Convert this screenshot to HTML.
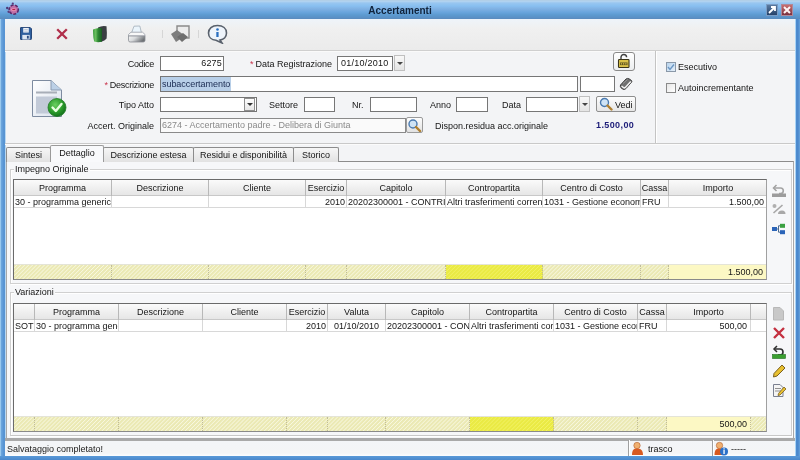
<!DOCTYPE html>
<html><head><meta charset="utf-8">
<style>
*{box-sizing:border-box;margin:0;padding:0}
html,body{width:800px;height:460px;overflow:hidden;background:#5d9ad6}
body{position:relative;font-family:"Liberation Sans",sans-serif;font-size:9px;color:#151515;filter:blur(0.3px)}
.a{position:absolute}
.lbl{position:absolute;white-space:nowrap;line-height:11px;text-align:right}
.box{position:absolute;background:#fff;border:1px solid #767676}
.req{color:#c8324a}
#frameL{left:0;top:19px;width:6px;height:441px;background:linear-gradient(90deg,#98c8ee 0,#98c8ee 1px,#6aa4dc 1.5px,#5592d2 4px,#5a96d4 5px,#a8d0f0 5px,#c8e0f4 6px)}
#frameR{left:795px;top:19px;width:5px;height:441px;background:linear-gradient(90deg,#a8d4f6 0,#a8d4f6 1px,#4e8cd0 1px,#4a88cc 3px,#6aa4dc 5px)}
#frameB{left:0;top:456px;width:800px;height:4px;background:linear-gradient(#5a9ad8,#4a88cc)}
#title{left:0;top:0;width:800px;height:19px;background:linear-gradient(#aac8e0 0px,#b8d6f0 1px,#98c6f0 3px,#88bff0 6px,#7fb0e2 9px,#6aa6de 12px,#5c9ad0 15px,#5a8fc4 18px,#5a8abb 19px)}
#title .t{position:absolute;left:0;width:800px;top:5px;text-align:center;font-weight:bold;font-size:10px;color:#10243c;line-height:12px}
#client{left:5px;top:19px;width:790px;height:437px;background:#f3f4f6}
#toolbar{left:5px;top:19px;width:790px;height:32px;background:linear-gradient(#eef4fa,#f0f0f0 30%,#ebebeb);border-bottom:1px solid #cfcfcf}
.dd{background:linear-gradient(#f8f8f8,#e4e4e4);border:1px solid #c0c0c0}
.dd::after{content:"";position:absolute;left:2px;top:6px;border-left:3px solid transparent;border-right:3px solid transparent;border-top:3px solid #444}
.dd2{background:linear-gradient(#fdfdfd,#e8e8e8);border:1px solid #8e8e8e}
.dd2::after{content:"";position:absolute;left:1.5px;top:4px;border-left:3px solid transparent;border-right:3px solid transparent;border-top:3px solid #333}

.tab{position:absolute;top:147px;height:15px;border:1px solid #8c8c8c;border-bottom:none;background:linear-gradient(#f6f6f6,#e2e2e2);text-align:center;line-height:14px;white-space:nowrap;border-radius:2px 2px 0 0}
.tab.sel{top:145px;height:17px;background:#f8f9fb;border-color:#9a9a9a;line-height:14px;z-index:2}
.grp{position:absolute;border:1px solid #d0d0d0;box-shadow:inset 1px 1px 0 #ffffff,1px 1px 0 #ffffff}
.glbl{position:absolute;background:#f6f7f9;padding:0 1px;line-height:11px;white-space:nowrap}
.grid{position:absolute;background:#fff;border:1px solid #6a6a6a;border-right-color:#a0a0a0;border-bottom-color:#8a8a8a;overflow:hidden}
.hdr{position:absolute;left:0;top:0;height:16px;background:linear-gradient(#fbfbfb,#f0f0f0 50%,#e6e6e6);border-bottom:1px solid #c8c8c8}
.hc{position:absolute;top:0;height:16px;border-right:1px solid #b8b8b8;text-align:center;line-height:17px;white-space:nowrap;overflow:hidden}
.rc{position:absolute;height:12px;border-right:1px solid #d8d8d8;border-bottom:1px solid #d8d8d8;line-height:12px;white-space:nowrap;overflow:hidden;padding:0 1px}
.tot{position:absolute;left:0;height:15px;background:repeating-linear-gradient(135deg,#ebe9b4 0px,#ebe9b4 1.3px,#f8f8e0 2px,#ebe9b4 2.8px);border-top:1px solid #e4e4d8}
.tc{position:absolute;top:0;height:14px;border-right:1px dotted #c0bc98;line-height:14px;text-align:right;padding-right:2px;white-space:nowrap}
.sep{position:absolute;width:1px;height:8px;background:#d6d6d6}
</style></head><body>
<div class="a" id="client"></div>
<div class="a" id="title"><div class="t">Accertamenti</div></div>
<div class="a" id="frameL"></div>
<div class="a" id="frameR"></div>
<div class="a" id="frameB"></div>
<div class="a" id="toolbar"></div>


<!-- title icon & buttons -->
<svg class="a" style="left:5px;top:2px" width="16" height="15" viewBox="0 0 16 15">
 <ellipse cx="8.7" cy="7.6" rx="4.6" ry="4.6" fill="#c070a8"/>
 <ellipse cx="8.7" cy="7.6" rx="4.6" ry="4.6" fill="none" stroke="#5a2a6a" stroke-width="1.6" stroke-dasharray="3 1.5"/>
 <ellipse cx="8.7" cy="7.6" rx="2.6" ry="1.6" fill="#f4a0c0"/>
 <rect x="7.3" y="6.8" width="3" height="1.4" fill="#b02050"/>
 <circle cx="2.2" cy="6" r="1.2" fill="#4a3a7a"/><circle cx="3.5" cy="9.8" r="1.1" fill="#5a3a7a"/><circle cx="7.8" cy="1.5" r="1.1" fill="#5a3a7a"/>
</svg>
<div class="a" style="left:766px;top:4px;width:12px;height:12px;background:linear-gradient(#5a7aa0,#25426a);border:1px solid #7a9cc4"></div>
<svg class="a" style="left:766px;top:4px" width="12" height="12" viewBox="0 0 12 12"><path d="M3 9 L8.5 3.5 M5 3 H9 V7" fill="none" stroke="#ffffff" stroke-width="1.8"/></svg>
<div class="a" style="left:781px;top:4px;width:12px;height:12px;background:linear-gradient(#c87070,#7a3040);border:1px solid #b08898"></div>
<svg class="a" style="left:781px;top:4px" width="12" height="12" viewBox="0 0 12 12"><path d="M3 3 L9 9 M9 3 L3 9" fill="none" stroke="#fff4f4" stroke-width="2"/></svg>
<!-- toolbar icons -->
<svg class="a" style="left:20px;top:27px" width="12" height="13" viewBox="0 0 13 14" preserveAspectRatio="none">
 <path d="M0.5 1 Q0.5 0.5 1 0.5 H11 L12.5 2 V12.5 Q12.5 13.5 11.5 13.5 H1 Q0.5 13.5 0.5 13 Z" fill="#2f5f9e"/>
 <path d="M0.5 1 Q0.5 0.5 1 0.5 H11 L12.5 2 V12.5 Q12.5 13.5 11.5 13.5 H1 Q0.5 13.5 0.5 13 Z" fill="none" stroke="#1c3e70" stroke-width="1"/>
 <rect x="3.5" y="1" width="6" height="5" fill="#eef2f8"/>
 <rect x="4.5" y="2.3" width="4" height="0.9" fill="#b8c4d4"/><rect x="4.5" y="4" width="4" height="0.9" fill="#b8c4d4"/>
 <rect x="2.5" y="8.5" width="8" height="5" fill="#dde6f2"/>
 <rect x="7.5" y="9.5" width="2" height="3" fill="#2a4a80"/>
</svg>
<svg class="a" style="left:55px;top:27px" width="14" height="14" viewBox="0 0 14 14">
 <path d="M2.2 2.2 L11.8 11.8 M11.8 2.2 L2.2 11.8" stroke="#b02e4a" stroke-width="2.3"/>
</svg>
<svg class="a" style="left:92px;top:25px" width="16" height="18" viewBox="0 0 16 18">
 <defs><linearGradient id="gb" x1="0" y1="0" x2="1" y2="0"><stop offset="0" stop-color="#3c9c40"/><stop offset="0.3" stop-color="#6cc060"/><stop offset="0.55" stop-color="#2e8a34"/><stop offset="1" stop-color="#1a5a22"/></linearGradient></defs>
 <path d="M6 2.5 Q10 0.3 14.5 1.3 Q15.2 8 14.6 13.5 Q13.2 15.6 10 16.6 L6 15 Z" fill="#3a3e42"/>
 <path d="M1 4.6 Q5 2.4 10 3.2 L10 16.8 Q5.5 17.6 2.2 16.6 Q1 13 1 4.6 Z" fill="url(#gb)"/>
</svg>
<svg class="a" style="left:127px;top:25px" width="19" height="18" viewBox="0 0 19 18">
 <defs><linearGradient id="pb" x1="0" y1="0" x2="1" y2="0.4"><stop offset="0" stop-color="#f4f4f4"/><stop offset="0.45" stop-color="#d8dadc"/><stop offset="1" stop-color="#6e7276"/></linearGradient></defs>
 <path d="M4.5 8 L7 1.2 L12.8 1 L14.5 8 Z" fill="#eaf4fb" stroke="#a0acb8" stroke-width="0.8"/>
 <path d="M1.5 9.5 L4 7.2 H15.5 L18 9.5 V11 H1.5 Z" fill="#f8f8f8" stroke="#9aa0a8" stroke-width="0.8"/>
 <path d="M1.5 11 H18 V15.3 Q18 17 16.3 17 H3.2 Q1.5 17 1.5 15.3 Z" fill="url(#pb)" stroke="#8a8e94" stroke-width="0.8"/>
</svg>
<div class="sep" style="left:162px;top:30px"></div>
<svg class="a" style="left:170px;top:24px" width="21" height="20" viewBox="0 0 21 20">
 <path d="M7 2 H19 V14 H7 Z" fill="#ececec" stroke="#8a8a8a" stroke-width="1.4"/>
 <path d="M1 10 L7 6 L14 11 L9 16 L6 18 Z" fill="#7e7e7e"/>
 <path d="M7 13 L13 9 L18 13 L12 18 Z" fill="#6e6e6e"/>
</svg>
<div class="sep" style="left:198px;top:30px"></div>
<svg class="a" style="left:207px;top:24px" width="21" height="20" viewBox="0 0 21 20">
 <path d="M10.5 1.5 C16 1.5 19.5 4.5 19.5 9 C19.5 13 16.5 15.5 13 16 L15 19 L9 16.3 C4.5 16 1.5 13 1.5 9 C1.5 4.5 5 1.5 10.5 1.5 Z" fill="#eef4fb" stroke="#59616c" stroke-width="1.6"/>
 <circle cx="10.5" cy="5.5" r="1.3" fill="#2a6fc0"/>
 <path d="M9.3 8 H11.6 V13 H9.3 Z" fill="#2a6fc0"/>
</svg>
<!-- form -->
<div class="a" style="left:5px;top:51px;width:790px;height:1px;background:#fafafa"></div>
<div class="a" style="left:655px;top:51px;width:1px;height:93px;background:#c4c4c4"></div>
<div class="a" style="left:656px;top:51px;width:1px;height:93px;background:#ffffff"></div>
<div class="a" style="left:5px;top:143px;width:790px;height:1px;background:#c9c9c9"></div>
<div class="a" style="left:5px;top:144px;width:790px;height:1px;background:#fbfbfb"></div>
<!-- doc icon -->
<svg class="a" style="left:30px;top:78px" width="40" height="42" viewBox="0 0 40 42">
 <defs><linearGradient id="dg" x1="0" y1="0" x2="1" y2="1"><stop offset="0" stop-color="#ffffff"/><stop offset="1" stop-color="#d8e0ec"/></linearGradient>
 <radialGradient id="gg" cx="0.4" cy="0.35" r="0.7"><stop offset="0" stop-color="#6ad060"/><stop offset="0.6" stop-color="#2a9a2a"/><stop offset="1" stop-color="#0f6a18"/></radialGradient></defs>
 <path d="M2.5 2.5 H21 L31.5 12 V38.5 H2.5 Z" fill="url(#dg)" stroke="#7d8ba0" stroke-width="1"/>
 <path d="M21 2.5 V12 H31.5" fill="#bcd0e6" stroke="#8a9ab0" stroke-width="1"/>
 <rect x="6" y="13.5" width="21" height="2" fill="#a8aeb8"/>
 <rect x="6" y="18.5" width="21" height="17" fill="#c2cad8"/>
 <circle cx="27" cy="29.5" r="9" fill="url(#gg)" stroke="#1d7a22" stroke-width="0.8"/>
 <path d="M22.5 29.5 L25.8 33 L31.5 26" fill="none" stroke="#e8ffe0" stroke-width="2.4" stroke-linecap="round" stroke-linejoin="round"/>
</svg>
<!-- labels row 1 -->
<div class="lbl" style="right:646px;top:59px;letter-spacing:-0.3px">Codice</div>
<div class="box" style="left:160px;top:56px;width:64px;height:15px;text-align:right;padding:1px 1px 0 0;line-height:11px;letter-spacing:0.2px">6275</div>
<div class="lbl" style="left:250px;top:59px"><span class="req" style="margin-right:2px">*</span>Data Registrazione</div>
<div class="box" style="left:337px;top:56px;width:56px;height:15px;padding:1px 0 0 3px;line-height:11px;letter-spacing:0.25px">01/10/2010</div>
<div class="a dd" style="left:394px;top:55px;width:11px;height:16px"></div>
<div class="a" style="left:613px;top:52px;width:22px;height:19px;border:1.5px solid #8a8a8a;border-radius:3px;background:linear-gradient(#ffffff,#eceef0)"></div>
<svg class="a" style="left:616px;top:53px" width="16" height="16" viewBox="0 0 16 16">
 <path d="M5 7 V4.3 A2.8 2.8 0 0 1 10.6 4.3" fill="none" stroke="#404040" stroke-width="1.4"/>
 <rect x="2.5" y="6.5" width="10.5" height="8" rx="0.8" fill="#d8c048" stroke="#3a3418" stroke-width="1.1"/>
 <rect x="4" y="9.5" width="7.5" height="2.6" fill="#5a5020"/>
 <rect x="4.8" y="10.2" width="1.3" height="1.3" fill="#d8c048"/><rect x="7" y="10.2" width="1.3" height="1.3" fill="#d8c048"/><rect x="9.2" y="10.2" width="1.3" height="1.3" fill="#d8c048"/>
</svg>
<!-- row 2 -->
<div class="lbl" style="right:646px;top:80px;letter-spacing:-0.25px"><span class="req" style="margin-right:2px">*</span>Descrizione</div>
<div class="box" style="left:160px;top:76px;width:418px;height:16px;padding:0 0 0 0;line-height:14px"><span style="display:inline-block;background:#b8cfe8;color:#1a2a50;padding:0 1px;letter-spacing:-0.05px">subaccertamento</span></div>
<div class="box" style="left:580px;top:76px;width:35px;height:16px"></div>
<svg class="a" style="left:619px;top:77px" width="14" height="14" viewBox="0 0 14 14">
 <path d="M1.5 8 L7 2 Q8.5 1 10 1.8 L12.5 3.5 Q13.2 4.3 12.5 5.2 L7 11.5 Q5.5 13 4 12.2 L2 10.8 Q1 9.8 1.5 8 Z" fill="#707070" stroke="#3e3e3e" stroke-width="1"/>
 <path d="M2.5 9 L4.5 10.6 Q5.5 11.2 6.3 10.4 L11.8 4.5" fill="none" stroke="#f0f0f0" stroke-width="1.5"/>
 <path d="M4 6.5 L8.5 2.5" stroke="#9a9a9a" stroke-width="1"/>
</svg>
<!-- row 3 -->
<div class="lbl" style="right:646px;top:100px">Tipo Atto</div>
<div class="box" style="left:160px;top:97px;width:97px;height:15px"></div>
<div class="a dd2" style="left:244px;top:98px;width:11px;height:13px"></div>
<div class="lbl" style="left:269px;top:100px">Settore</div>
<div class="box" style="left:304px;top:97px;width:31px;height:15px"></div>
<div class="lbl" style="left:352px;top:100px">Nr.</div>
<div class="box" style="left:370px;top:97px;width:47px;height:15px"></div>
<div class="lbl" style="left:430px;top:100px">Anno</div>
<div class="box" style="left:456px;top:97px;width:32px;height:15px"></div>
<div class="lbl" style="left:502px;top:100px">Data</div>
<div class="box" style="left:526px;top:97px;width:52px;height:15px"></div>
<div class="a dd" style="left:579px;top:96px;width:11px;height:16px"></div>
<div class="a" style="left:596px;top:96px;width:40px;height:16px;border:1px solid #8e8e8e;border-radius:2px;background:linear-gradient(#fdfdfd,#e6e6e6)"></div>
<svg class="a" style="left:599px;top:97px" width="14" height="14" viewBox="0 0 14 14">
 <circle cx="5.5" cy="5.5" r="4" fill="#cfe4f6" stroke="#4a7ab0" stroke-width="1.4"/>
 <path d="M8.5 8.5 L12.5 12.5" stroke="#b08030" stroke-width="2.4" stroke-linecap="round"/>
</svg>
<div class="lbl" style="left:615px;top:100px;color:#111">Vedi</div>
<!-- row 4 -->
<div class="lbl" style="right:646px;top:121px">Accert. Originale</div>
<div class="box" style="left:160px;top:118px;width:246px;height:15px;padding:1px 0 0 1px;line-height:11px;color:#8a8a8a;background:#fafafa;border-color:#8a8a8a">6274 - Accertamento padre - Delibera di Giunta</div>
<div class="a" style="left:406px;top:117px;width:17px;height:16px;border:1px solid #9a9a9a;border-radius:2px;background:linear-gradient(#fdfdfd,#e2e2e2)"></div>
<svg class="a" style="left:407px;top:118px" width="15" height="14" viewBox="0 0 15 14">
 <circle cx="6" cy="6" r="4" fill="#cfe4f6" stroke="#4a7ab0" stroke-width="1.4"/>
 <path d="M9 9 L13 13" stroke="#b08030" stroke-width="2.4" stroke-linecap="round"/>
</svg>
<div class="lbl" style="left:435px;top:121px">Dispon.residua acc.originale</div>
<div class="lbl" style="left:596px;top:120px;font-weight:bold;font-size:9px;letter-spacing:0.4px;color:#1c1c78">1.500,00</div>
<!-- checkboxes -->
<div class="a" style="left:666px;top:62px;width:10px;height:10px;border:1px solid #8a98a8;background:linear-gradient(135deg,#b8d4ee,#e4eef8)"></div>
<svg class="a" style="left:667px;top:63px" width="8" height="8" viewBox="0 0 8 8"><path d="M1 4 L3 6.5 L7 1.5" fill="none" stroke="#6a96c4" stroke-width="1.4"/></svg>
<div class="lbl" style="left:678px;top:62px">Esecutivo</div>
<div class="a" style="left:666px;top:83px;width:10px;height:10px;border:1px solid #8a8a8a;background:linear-gradient(135deg,#e6e6e6,#ffffff)"></div>
<div class="lbl" style="left:678px;top:83px">Autoincrementante</div>

<!-- tabs -->
<div class="a" style="left:6px;top:161px;width:788px;height:278px;border:1px solid #a8a8a8;border-top-color:#8c8c8c;background:#f6f7f9"></div>
<div class="tab" style="left:6px;width:45px">Sintesi</div>
<div class="tab sel" style="left:50px;width:54px">Dettaglio</div>
<div class="tab" style="left:103px;width:91px">Descrizione estesa</div>
<div class="tab" style="left:193px;width:101px">Residui e disponibilità</div>
<div class="tab" style="left:293px;width:46px">Storico</div>
<!-- group 1 -->
<div class="grp" style="left:10px;top:169px;width:782px;height:115px"></div>
<div class="glbl" style="left:14px;top:164px">Impegno Originale</div>
<div class="grid" style="left:13px;top:179px;width:754px;height:101px">
 <div class="hdr" style="width:752px"></div>
 <div class="hc" style="left:0;width:98px">Programma</div>
 <div class="hc" style="left:98px;width:97px">Descrizione</div>
 <div class="hc" style="left:195px;width:97px">Cliente</div>
 <div class="hc" style="left:292px;width:41px">Esercizio</div>
 <div class="hc" style="left:333px;width:99px">Capitolo</div>
 <div class="hc" style="left:432px;width:97px">Contropartita</div>
 <div class="hc" style="left:529px;width:98px">Centro di Costo</div>
 <div class="hc" style="left:627px;width:28px">Cassa</div>
 <div class="hc" style="left:655px;width:98px;border-right:none">Importo</div>
 <div class="rc" style="left:0;top:16px;width:98px">30 - programma generico</div>
 <div class="rc" style="left:98px;top:16px;width:97px"></div>
 <div class="rc" style="left:195px;top:16px;width:97px"></div>
 <div class="rc" style="left:292px;top:16px;width:41px;text-align:right">2010</div>
 <div class="rc" style="left:333px;top:16px;width:99px">20202300001 - CONTRIBUTI</div>
 <div class="rc" style="left:432px;top:16px;width:97px">Altri trasferimenti correnti</div>
 <div class="rc" style="left:529px;top:16px;width:98px">1031 - Gestione economica</div>
 <div class="rc" style="left:627px;top:16px;width:28px">FRU</div>
 <div class="rc" style="left:655px;top:16px;width:98px;text-align:right;padding-right:3px;border-right:none">1.500,00</div>
 <div class="tot" style="top:84px;width:752px">
  <div class="tc" style="left:0;width:98px"></div><div class="tc" style="left:98px;width:97px"></div><div class="tc" style="left:195px;width:97px"></div><div class="tc" style="left:292px;width:41px"></div><div class="tc" style="left:333px;width:99px"></div>
  <div class="tc" style="left:432px;width:97px;background:repeating-linear-gradient(135deg,#eaea44 0px,#eaea44 1.4px,#f2f266 2px,#eaea44 2.8px)"></div>
  <div class="tc" style="left:529px;width:98px"></div><div class="tc" style="left:627px;width:28px"></div>
  <div class="tc" style="left:655px;width:97px;background:#fcf8c4;border-right:none;padding-right:3px">1.500,00</div>
 </div>
</div>
<!-- group 2 -->
<div class="grp" style="left:10px;top:292px;width:782px;height:144px;border-bottom-color:#c8c8c8"></div>
<div class="glbl" style="left:14px;top:287px">Variazioni</div>
<div class="grid" style="left:13px;top:303px;width:754px;height:129px">
 <div class="hdr" style="width:752px"></div>
 <div class="hc" style="left:0;width:21px"></div>
 <div class="hc" style="left:21px;width:84px">Programma</div>
 <div class="hc" style="left:105px;width:84px">Descrizione</div>
 <div class="hc" style="left:189px;width:84px">Cliente</div>
 <div class="hc" style="left:273px;width:41px">Esercizio</div>
 <div class="hc" style="left:314px;width:58px">Valuta</div>
 <div class="hc" style="left:372px;width:84px">Capitolo</div>
 <div class="hc" style="left:456px;width:84px">Contropartita</div>
 <div class="hc" style="left:540px;width:84px">Centro di Costo</div>
 <div class="hc" style="left:624px;width:29px">Cassa</div>
 <div class="hc" style="left:653px;width:84px">Importo</div>
 <div class="hc" style="left:737px;width:16px;border-right:none"></div>
 <div class="rc" style="left:0;top:16px;width:21px">SOT</div>
 <div class="rc" style="left:21px;top:16px;width:84px">30 - programma generico</div>
 <div class="rc" style="left:105px;top:16px;width:84px"></div>
 <div class="rc" style="left:189px;top:16px;width:84px"></div>
 <div class="rc" style="left:273px;top:16px;width:41px;text-align:right">2010</div>
 <div class="rc" style="left:314px;top:16px;width:58px;text-align:center">01/10/2010</div>
 <div class="rc" style="left:372px;top:16px;width:84px">20202300001 - CONTRIBUTI</div>
 <div class="rc" style="left:456px;top:16px;width:84px">Altri trasferimenti correnti</div>
 <div class="rc" style="left:540px;top:16px;width:84px">1031 - Gestione economica</div>
 <div class="rc" style="left:624px;top:16px;width:29px">FRU</div>
 <div class="rc" style="left:653px;top:16px;width:84px;text-align:right;padding-right:3px">500,00</div>
 <div class="rc" style="left:737px;top:16px;width:16px;border-right:none"></div>
 <div class="tot" style="top:112px;width:752px">
  <div class="tc" style="left:0;width:21px"></div><div class="tc" style="left:21px;width:84px"></div><div class="tc" style="left:105px;width:84px"></div><div class="tc" style="left:189px;width:84px"></div><div class="tc" style="left:273px;width:41px"></div><div class="tc" style="left:314px;width:58px"></div><div class="tc" style="left:372px;width:84px"></div>
  <div class="tc" style="left:456px;width:84px;background:repeating-linear-gradient(135deg,#eaea44 0px,#eaea44 1.4px,#f2f266 2px,#eaea44 2.8px)"></div>
  <div class="tc" style="left:540px;width:84px"></div><div class="tc" style="left:624px;width:29px"></div>
  <div class="tc" style="left:653px;width:84px;background:#fcf8c4;padding-right:3px">500,00</div>
  <div class="tc" style="left:737px;width:15px;border-right:none"></div>
 </div>
</div>

<!-- side icons grid1 -->
<svg class="a" style="left:771px;top:183px" width="16" height="15" viewBox="0 0 16 15">
 <path d="M5.5 2 L2.5 5 L5.5 8" fill="none" stroke="#a0a0a0" stroke-width="1.5"/>
 <path d="M3 5 H9.5 A2.8 2.8 0 0 1 9.5 10.6 H8" fill="none" stroke="#a4a4a4" stroke-width="1.6"/>
 <rect x="1" y="10.5" width="14" height="3.5" fill="#9c9c9c"/>
</svg>
<svg class="a" style="left:771px;top:203px" width="15" height="12" viewBox="0 0 15 12">
 <circle cx="3.5" cy="3" r="2" fill="#b0b0b0"/>
 <path d="M2.5 10 L11.5 2" stroke="#a8a8a8" stroke-width="1.6"/>
 <path d="M7 11 Q7 7.5 11 7.5 Q14.5 7.5 14.5 11 Z" fill="#a8a8a8"/>
</svg>
<svg class="a" style="left:771px;top:223px" width="15" height="12" viewBox="0 0 15 12">
 <rect x="1" y="4" width="5" height="4" fill="#2a64b8"/>
 <rect x="9" y="0.8" width="5" height="4" fill="#3aa040"/>
 <rect x="9" y="7.2" width="5" height="4" fill="#2a64b8"/>
 <path d="M6 6 H7.5 V2.8 H9 M7.5 6 V9.2 H9" fill="none" stroke="#4a6a90" stroke-width="1"/>
</svg>
<!-- side icons grid2 -->
<svg class="a" style="left:772px;top:307px" width="13" height="14" viewBox="0 0 13 14">
 <path d="M1.5 0.5 H8 L11.5 4 V13 H1.5 Z" fill="#c8c8c8" stroke="#b8b8b8" stroke-width="1"/>
</svg>
<svg class="a" style="left:772px;top:326px" width="14" height="14" viewBox="0 0 14 14">
 <path d="M2 2 L12 12 M12 2 L2 12" stroke="#c43040" stroke-width="2.4"/>
</svg>
<svg class="a" style="left:772px;top:345px" width="14" height="14" viewBox="0 0 14 14">
 <path d="M5 1 L2 4 L5 7" fill="none" stroke="#303030" stroke-width="1.5"/>
 <path d="M2.5 4 H8 A3 3 0 0 1 8 10 H6" fill="none" stroke="#303030" stroke-width="1.6"/>
 <rect x="0.5" y="9.5" width="13" height="4" fill="#3aa030" stroke="#207020" stroke-width="0.6"/>
</svg>
<svg class="a" style="left:772px;top:364px" width="14" height="14" viewBox="0 0 14 14">
 <path d="M10 1 L13 4 L5 12 L1.5 13 L2 9.5 Z" fill="#e8c030" stroke="#7a6020" stroke-width="1"/>
</svg>
<svg class="a" style="left:772px;top:383px" width="15" height="15" viewBox="0 0 15 15">
 <path d="M1.5 1.5 H8 L11 4.5 V13.5 H1.5 Z" fill="#f4f4f4" stroke="#7a8090" stroke-width="1"/>
 <rect x="3" y="5" width="6" height="1" fill="#909090"/><rect x="3" y="7.5" width="6" height="1" fill="#909090"/>
 <path d="M12 4 L14 6 L8 12 L6 12.5 L6.5 10.5 Z" fill="#e8c030" stroke="#7a6020" stroke-width="0.8"/>
</svg>
<!-- status bar -->
<div class="a" style="left:5px;top:438px;width:790px;height:3px;background:#a9a9a9"></div>
<div class="a" style="left:5px;top:441px;width:790px;height:15px;background:linear-gradient(#f3f5f8,#f4f5f6 80%,#fbfdff)"></div>
<div class="lbl" style="left:7px;top:444px;color:#1a1a1a">Salvataggio completato!</div>
<div class="a" style="left:628px;top:440px;width:1px;height:16px;background:#a0a0a0"></div>
<div class="a" style="left:629px;top:440px;width:1px;height:16px;background:#ffffff"></div>
<div class="a" style="left:712px;top:440px;width:1px;height:16px;background:#a0a0a0"></div>
<div class="a" style="left:713px;top:440px;width:1px;height:16px;background:#ffffff"></div>
<svg class="a" style="left:631px;top:441px" width="14" height="15" viewBox="0 0 14 15">
 <circle cx="6" cy="4.5" r="3.2" fill="#f0b070" stroke="#b06030" stroke-width="0.6"/>
 <path d="M1 14 C1 8.5 3 7.5 6 7.5 C9 7.5 12 8.5 12 14 Z" fill="#d85a20"/>
</svg>
<div class="lbl" style="left:648px;top:444px">trasco</div>
<svg class="a" style="left:714px;top:441px" width="15" height="15" viewBox="0 0 15 15">
 <circle cx="5.5" cy="4.5" r="3.2" fill="#f0b070" stroke="#b06030" stroke-width="0.6"/>
 <path d="M0.5 14 C0.5 8.5 2.5 7.5 5.5 7.5 C8.5 7.5 10 8.5 10 14 Z" fill="#d85a20"/>
 <circle cx="10" cy="10.5" r="4" fill="#2a70c8"/>
 <rect x="9.4" y="9" width="1.3" height="4" fill="#fff"/><rect x="9.4" y="7.3" width="1.3" height="1.2" fill="#fff"/>
</svg>
<div class="lbl" style="left:731px;top:444px">-----</div>
</body></html>
